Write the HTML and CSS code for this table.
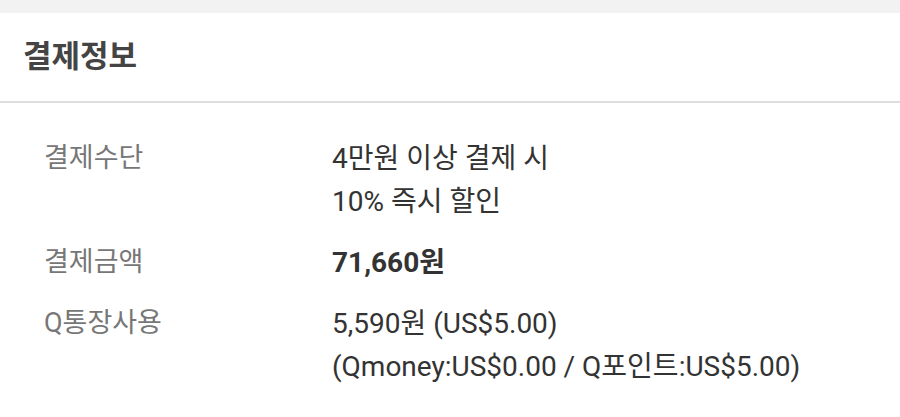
FILE: index.html
```html
<!DOCTYPE html>
<html lang="ko">
<head>
<meta charset="utf-8">
<link rel="stylesheet" href="styles.css">
</head>
<body>
<div class="top-band"></div>
<section class="panel">
  <header class="panel-head">
    <h2 class="panel-title">결제정보</h2>
  </header>
  <dl class="info">
    <div class="row">
      <dt class="label">결제수단</dt>
      <dd class="value">4만원 이상 결제 시<br>10% 즉시 할인</dd>
    </div>
    <div class="row">
      <dt class="label">결제금액</dt>
      <dd class="value strong">71,660원</dd>
    </div>
    <div class="row">
      <dt class="label">Q통장사용</dt>
      <dd class="value">5,590원 (US$5.00)<br>(Qmoney:US$0.00 / Q포인트:US$5.00)</dd>
    </div>
  </dl>
</section>
</body>
</html>
```
FILE: styles.css
```css
html, body {
  margin: 0;
  padding: 0;
  background: #ffffff;
}
body {
  font-family: Roboto, "Noto Sans CJK KR", sans-serif;
  width: 900px;
  height: 417px;
  overflow: hidden;
}
.top-band {
  height: 13px;
  background: #f2f2f2;
}
.panel-head {
  height: 90px;
  border-bottom: 2px solid #dedede;
  display: flex;
  align-items: center;
  padding-left: 23px;
  padding-bottom: 2px;
  box-sizing: border-box;
}
.panel-title {
  margin: 0;
  font-size: 31px;
  font-weight: 700;
  color: #444444;
  line-height: 1;
}
.info {
  margin: 0;
  padding: 34px 0 0 44px;
  display: flex;
  flex-direction: column;
  gap: 18px;
}
.row {
  display: grid;
  grid-template-columns: 288px 1fr;
}
.label {
  margin: 0;
  font-size: 27px;
  line-height: 43px;
  color: #777777;
}
.value {
  margin: 0;
  font-size: 28px;
  line-height: 43px;
  color: #333333;
}
.value.strong {
  font-weight: 700;
}
```
